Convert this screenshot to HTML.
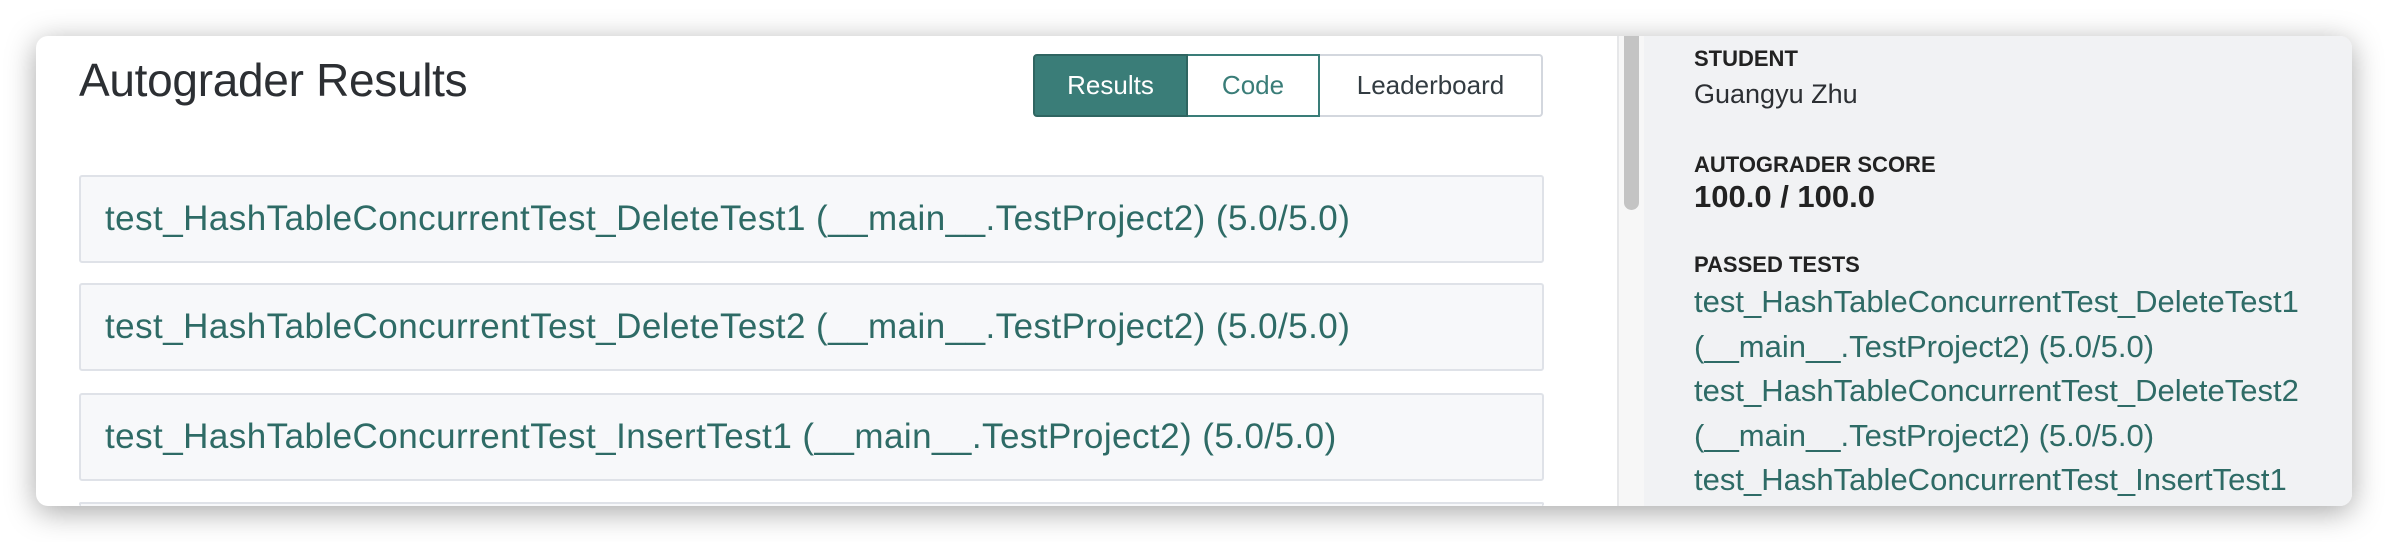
<!DOCTYPE html>
<html><head><meta charset="utf-8"><style>
*{box-sizing:border-box;margin:0;padding:0}
body{width:2388px;height:542px;background:#fff;position:relative;overflow:hidden;font-family:"Liberation Sans",sans-serif}
.win{position:absolute;left:36px;top:36px;width:2316px;height:470px;border-radius:12px;overflow:hidden;background:#fff;box-shadow:0 6px 30px rgba(0,0,0,.35)}
.title{position:absolute;left:43px;top:17px;font-size:46px;color:#2c2f33;letter-spacing:-0.3px}
.tabs{position:absolute;left:997px;top:18px;height:63px;display:flex}
.tab{height:63px;display:flex;align-items:center;justify-content:center;font-size:26px}
.t1{width:155px;background:#3a7d78;color:#fff;border:2px solid #2f6561;border-radius:4px 0 0 4px}
.t2{width:132px;color:#3a7d78;border:2px solid #3a7d78;border-left:none}
.t3{width:223px;color:#333c42;border:2px solid #d3d7de;border-left:none;border-radius:0 4px 4px 0}
.row{position:absolute;left:43px;width:1465px;height:88px;background:#f7f8fa;border:2px solid #dfe2e8;border-radius:3px;display:flex;align-items:center;padding-left:24px;font-size:35px;color:#2e6b66;letter-spacing:0.45px;white-space:nowrap}
.div{position:absolute;left:1581px;top:0;width:2px;height:470px;background:#e6e7e9}
.gut{position:absolute;left:1583px;top:0;width:25px;height:470px;background:#f7f7f7}
.scroll{position:absolute;left:1588px;top:0;width:15px;height:174px;background:#c4c4c4;border-radius:0 0 8px 8px}
.side{position:absolute;left:1608px;top:0;width:708px;height:470px;background:#f1f2f4}
.lab{position:absolute;left:50px;font-size:22px;font-weight:bold;color:#222}
.val{position:absolute;left:50px;font-size:27px;color:#2c2f33}
.pt{position:absolute;left:50px;font-size:31px;line-height:44.5px;color:#2e6b66;width:680px;white-space:nowrap}
</style></head><body>
<div class="win">
<div class="title">Autograder Results</div>
<div class="tabs"><div class="tab t1">Results</div><div class="tab t2">Code</div><div class="tab t3">Leaderboard</div></div>
<div class="row" style="top:139px">test_HashTableConcurrentTest_DeleteTest1 (__main__.TestProject2) (5.0/5.0)</div>
<div class="row" style="top:247px">test_HashTableConcurrentTest_DeleteTest2 (__main__.TestProject2) (5.0/5.0)</div>
<div class="row" style="top:357px">test_HashTableConcurrentTest_InsertTest1 (__main__.TestProject2) (5.0/5.0)</div>
<div class="row" style="top:466px;height:4px;border-bottom:none"></div>
<div class="div"></div><div class="gut"></div><div class="scroll"></div>
<div class="side">
<div class="lab" style="top:10px">STUDENT</div>
<div class="val" style="top:43px">Guangyu Zhu</div>
<div class="lab" style="top:116px">AUTOGRADER SCORE</div>
<div class="val" style="top:143px;font-weight:bold;font-size:31px;color:#222">100.0 / 100.0</div>
<div class="lab" style="top:216px">PASSED TESTS</div>
<div class="pt" style="top:244px">test_HashTableConcurrentTest_DeleteTest1<br>(__main__.TestProject2) (5.0/5.0)<br>test_HashTableConcurrentTest_DeleteTest2<br>(__main__.TestProject2) (5.0/5.0)<br>test_HashTableConcurrentTest_InsertTest1</div>
</div>
</div>
</body></html>
